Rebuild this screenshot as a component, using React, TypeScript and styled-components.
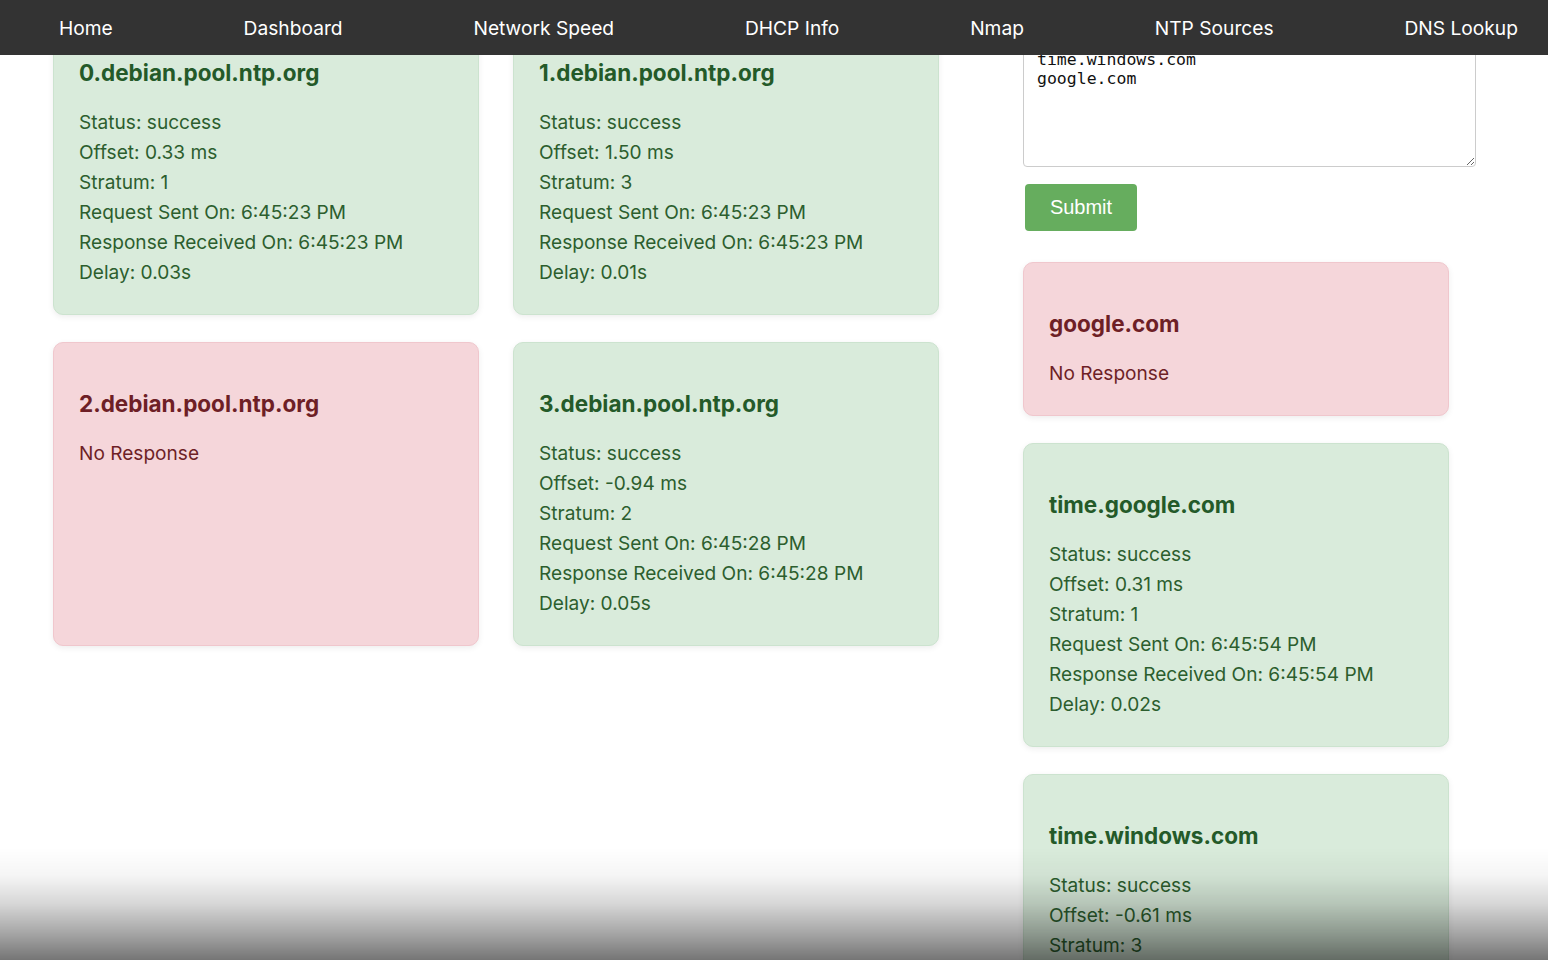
import React, { useLayoutEffect, useEffect } from "react";
import styled, { createGlobalStyle } from "styled-components";

const GlobalStyle = createGlobalStyle`
  html, body { margin: 0; padding: 0; background: #fff; }
  body { font-family: Inter, "Noto Sans", sans-serif; }
  * { box-sizing: border-box; }
`;

const NavBar = styled.nav`
  position: fixed;
  top: 0;
  left: 0;
  right: 0;
  height: 55px;
  background: #333333;
  display: flex;
  align-items: center;
  justify-content: space-between;
  padding: 0 30px 0 59px;
  z-index: 10;
`;

const NavLink = styled.a`
  color: #ffffff;
  font-family: Inter, sans-serif;
  font-size: 19.2px;
  text-decoration: none;
  line-height: 24px;
`;

const Main = styled.main`
  display: flex;
  align-items: flex-start;
  gap: 84px;
  padding: 80px 40px 60px 53px;
`;

const ResultsGrid = styled.section`
  margin-top: 69px;
  display: grid;
  grid-template-columns: 426px 426px;
  column-gap: 34px;
  row-gap: 27px;
`;

const Sidebar = styled.section`
  width: 453px;
  display: flex;
  flex-direction: column;
  align-items: flex-start;
`;

const ServerInput = styled.textarea`
  width: 453px;
  height: 225px;
  padding: 12px 13px;
  border: 1px solid #cccccc;
  border-radius: 4px;
  font-family: "DejaVu Sans Mono", "Liberation Mono", monospace;
  font-size: 16.5px;
  line-height: 19px;
  color: #111;
  resize: vertical;
  overflow: hidden;
  outline: none;
`;

const SubmitButton = styled.button`
  margin: 17px 0 0 2px;
  width: 112px;
  height: 47px;
  background: #66ad5e;
  color: #ffffff;
  border: none;
  border-radius: 4px;
  font-family: "Liberation Sans", Arial, sans-serif;
  font-size: 20px;
  cursor: pointer;
`;

const SideCards = styled.div`
  margin-top: 31px;
  width: 426px;
  display: flex;
  flex-direction: column;
  gap: 27px;
`;

const Card = styled.div<{ $ok: boolean }>`
  background: ${(p) => (p.$ok ? "#d9ebdb" : "#f5d6da")};
  border: 1px solid ${(p) => (p.$ok ? "#cce3cf" : "#f0c7cd")};
  border-radius: 10px;
  box-shadow: 0 2px 6px rgba(0, 0, 0, 0.07);
  padding: 26px 25px 27px;
  color: ${(p) => (p.$ok ? "#2c5e2e" : "#6e1f26")};
`;

const CardTitle = styled.h3<{ $ok: boolean }>`
  margin: 20px 0 20px;
  font-size: 22.5px;
  line-height: 29px;
  font-weight: 700;
  color: ${(p) => (p.$ok ? "#245a29" : "#6e1f26")};
`;

const Line = styled.p`
  margin: 0;
  font-size: 19.1px;
  line-height: 30px;
`;

const BottomFade = styled.div`
  position: fixed;
  left: 0;
  right: 0;
  bottom: 0;
  height: 112px;
  pointer-events: none;
  background: linear-gradient(
    to bottom,
    rgba(0, 0, 0, 0) 0%,
    rgba(0, 0, 0, 0.04) 25%,
    rgba(0, 0, 0, 0.16) 50%,
    rgba(0, 0, 0, 0.34) 75%,
    rgba(0, 0, 0, 0.54) 100%
  );
  z-index: 20;
`;

type Result = {
  host: string;
  ok: boolean;
  offset?: string;
  stratum?: number;
  sent?: string;
  received?: string;
  delay?: string;
};

const gridResults: Result[] = [
  { host: "0.debian.pool.ntp.org", ok: true, offset: "0.33", stratum: 1, sent: "6:45:23 PM", received: "6:45:23 PM", delay: "0.03" },
  { host: "1.debian.pool.ntp.org", ok: true, offset: "1.50", stratum: 3, sent: "6:45:23 PM", received: "6:45:23 PM", delay: "0.01" },
  { host: "2.debian.pool.ntp.org", ok: false },
  { host: "3.debian.pool.ntp.org", ok: true, offset: "-0.94", stratum: 2, sent: "6:45:28 PM", received: "6:45:28 PM", delay: "0.05" },
];

const sideResults: Result[] = [
  { host: "google.com", ok: false },
  { host: "time.google.com", ok: true, offset: "0.31", stratum: 1, sent: "6:45:54 PM", received: "6:45:54 PM", delay: "0.02" },
  { host: "time.windows.com", ok: true, offset: "-0.61", stratum: 3, sent: "6:45:54 PM", received: "6:45:54 PM", delay: "0.04" },
];

const navItems = ["Home", "Dashboard", "Network Speed", "DHCP Info", "Nmap", "NTP Sources", "DNS Lookup"];

const servers = [
  "0.debian.pool.ntp.org",
  "1.debian.pool.ntp.org",
  "2.debian.pool.ntp.org",
  "3.debian.pool.ntp.org",
  "time.google.com",
  "time.windows.com",
  "google.com",
].join("\n");

function ResultCard({ r }: { r: Result }) {
  return (
    <Card $ok={r.ok}>
      <CardTitle $ok={r.ok}>{r.host}</CardTitle>
      {r.ok ? (
        <>
          <Line>Status: success</Line>
          <Line>Offset: {r.offset} ms</Line>
          <Line>Stratum: {r.stratum}</Line>
          <Line>Request Sent On: {r.sent}</Line>
          <Line>Response Received On: {r.received}</Line>
          <Line>Delay: {r.delay}s</Line>
        </>
      ) : (
        <Line>No Response</Line>
      )}
    </Card>
  );
}

export default function App() {
  const scroll = () => window.scrollTo(0, 138);
  useLayoutEffect(() => {
    scroll();
  }, []);
  useEffect(() => {
    scroll();
    const id = requestAnimationFrame(scroll);
    const t = setTimeout(scroll, 50);
    return () => {
      cancelAnimationFrame(id);
      clearTimeout(t);
    };
  }, []);

  return (
    <>
      <GlobalStyle />
      <NavBar>
        {navItems.map((n) => (
          <NavLink key={n} href="#">
            {n}
          </NavLink>
        ))}
      </NavBar>
      <Main>
        <ResultsGrid>
          {gridResults.map((r) => (
            <ResultCard key={r.host} r={r} />
          ))}
        </ResultsGrid>
        <Sidebar>
          <ServerInput defaultValue={servers} spellCheck={false} />
          <SubmitButton>Submit</SubmitButton>
          <SideCards>
            {sideResults.map((r) => (
              <ResultCard key={r.host} r={r} />
            ))}
          </SideCards>
        </Sidebar>
      </Main>
      <BottomFade />
    </>
  );
}
